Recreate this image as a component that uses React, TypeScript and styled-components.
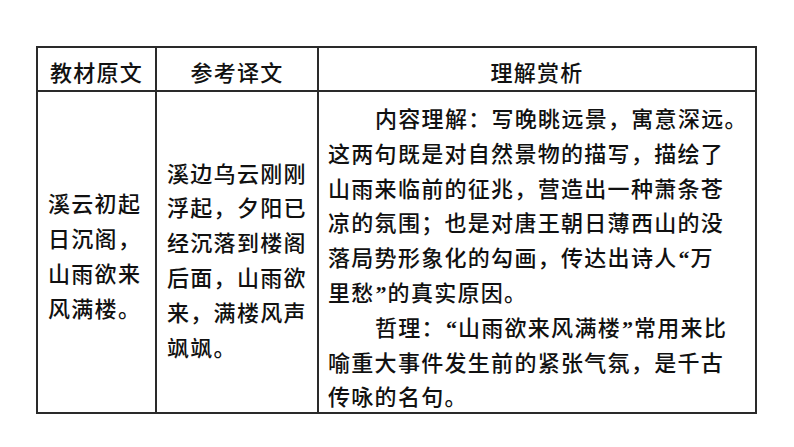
import styled, { createGlobalStyle } from "styled-components";

const GlobalStyle = createGlobalStyle`
  html, body {
    margin: 0;
    padding: 0;
    background: #fff;
  }
  body {
    font-family: "Noto Sans CJK SC", "Noto Sans", sans-serif;
    color: #111;
  }
`;

const Page = styled.div`
  width: 794px;
  height: 447px;
  padding: 46px 0 0 36px;
  box-sizing: border-box;
`;

const Table = styled.div`
  display: grid;
  grid-template-columns: 119px 162px 438px;
  grid-template-rows: 44px 322px;
  border-left: 2px solid #2a2a2a;
  border-top: 2px solid #2a2a2a;
  width: max-content;
`;

const Cell = styled.div<{ $head?: boolean; $pt?: number }>`
  box-sizing: border-box;
  border-right: 2px solid #2a2a2a;
  border-bottom: 2px solid #2a2a2a;
  font-size: 22px;
  font-weight: 500;
  letter-spacing: 1.3px;
  line-height: 34.8px;
  display: flex;
  flex-direction: column;
  justify-content: center;
  align-items: ${(p) => (p.$head ? "center" : "flex-start")};
  padding: ${(p) => (p.$head ? "4px 0 0" : `${p.$pt ?? 0}px 0 0 10px`)};
  white-space: nowrap;
`;

const TextCell = styled(Cell)`
  justify-content: flex-start;
  padding: 8px 0 0 9px;
`;

const Line = styled.div<{ $indent?: boolean }>`
  height: 34.8px;
  padding-left: ${(p) => (p.$indent ? "47px" : "0")};
`;

const Quote = styled.span`
  font-family: "Liberation Serif", serif;
  font-weight: 700;
  letter-spacing: 0;
  line-height: 0;
  padding: 0 1px;
`;

// split quotes out so they render narrow like the printed original
const withQuotes = (text: string) =>
  text.split(/([“”])/).map((part, i) =>
    part === "“" || part === "”" ? <Quote key={i}>{part}</Quote> : part
  );

const original = ["溪云初起", "日沉阁，", "山雨欲来", "风满楼。"];
const translation = [
  "溪边乌云刚刚",
  "浮起，夕阳已",
  "经沉落到楼阁",
  "后面，山雨欲",
  "来，满楼风声",
  "飒飒。",
];
const analysis: { text: string; indent?: boolean }[] = [
  { text: "内容理解：写晚眺远景，寓意深远。", indent: true },
  { text: "这两句既是对自然景物的描写，描绘了" },
  { text: "山雨来临前的征兆，营造出一种萧条苍" },
  { text: "凉的氛围；也是对唐王朝日薄西山的没" },
  { text: "落局势形象化的勾画，传达出诗人“万" },
  { text: "里愁”的真实原因。" },
  { text: "哲理：“山雨欲来风满楼”常用来比", indent: true },
  { text: "喻重大事件发生前的紧张气氛，是千古" },
  { text: "传咏的名句。" },
];

export default function App() {
  return (
    <Page>
      <GlobalStyle />
      <Table>
        <Cell $head>教材原文</Cell>
        <Cell $head>参考译文</Cell>
        <Cell $head>理解赏析</Cell>
        <Cell $pt={6}>
          {original.map((l) => (
            <Line key={l}>{l}</Line>
          ))}
        </Cell>
        <Cell $pt={14}>
          {translation.map((l) => (
            <Line key={l}>{l}</Line>
          ))}
        </Cell>
        <TextCell>
          {analysis.map((l) => (
            <Line key={l.text} $indent={l.indent}>
              {withQuotes(l.text)}
            </Line>
          ))}
        </TextCell>
      </Table>
    </Page>
  );
}
